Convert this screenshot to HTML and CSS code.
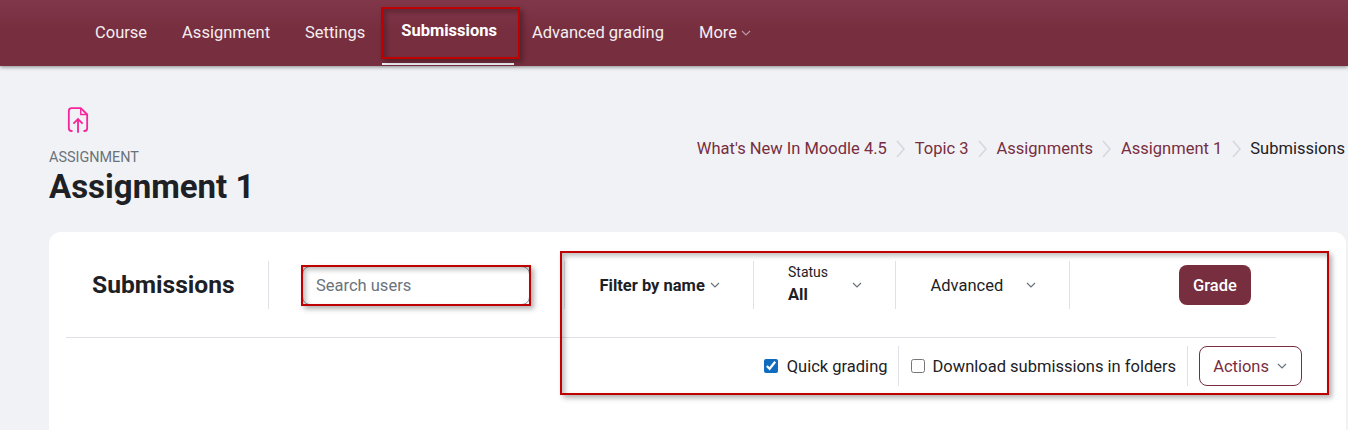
FILE: index.html
```html
<!DOCTYPE html>
<html lang="en">
<head>
  <meta charset="UTF-8">
  <meta name="viewport" content="width=device-width, initial-scale=1.0">
  <title>Assignment 1: Submissions</title>
  <link rel="stylesheet" href="styles.css">
</head>
<body>
  <nav class="topnav">
    <a class="nav-item">Course</a>
    <a class="nav-item">Assignment</a>
    <a class="nav-item">Settings</a>
    <a class="nav-item active">Submissions<span class="callout callout-nav"></span></a>
    <a class="nav-item">Advanced grading</a>
    <a class="nav-item">More
      <svg class="chev chev-nav" viewBox="0 0 10 6"><path d="M1 1l4 4 4-4"/></svg>
    </a>
  </nav>

  <header class="page-head">
    <div class="page-title">
      <svg class="mod-icon" viewBox="0 0 24 30">
        <path d="M6 27H5a3 3 0 0 1-3-3V5a3 3 0 0 1 3-3h10l7 7v15a3 3 0 0 1-3 3h-1"/>
        <path d="M15 2v7h7" class="fold"/>
        <path d="M12 29V14M7 19l5-5 5 5"/>
      </svg>
      <div class="mod-type">ASSIGNMENT</div>
      <h1>Assignment 1</h1>
    </div>
    <ol class="breadcrumb">
      <li><a>What's New In Moodle 4.5</a></li>
      <li><svg class="crumb-sep" viewBox="0 0 9 18"><path d="M1 1l7 8-7 8"/></svg><a>Topic 3</a></li>
      <li><svg class="crumb-sep" viewBox="0 0 9 18"><path d="M1 1l7 8-7 8"/></svg><a>Assignments</a></li>
      <li><svg class="crumb-sep" viewBox="0 0 9 18"><path d="M1 1l7 8-7 8"/></svg><a>Assignment 1</a></li>
      <li><svg class="crumb-sep" viewBox="0 0 9 18"><path d="M1 1l7 8-7 8"/></svg><span>Submissions</span></li>
    </ol>
  </header>

  <main class="card">
    <div class="toolbar">
      <h2 class="card-title">Submissions</h2>
      <div class="search">
        <input type="text" placeholder="Search users">
        <span class="callout"></span>
      </div>
      <div class="filters">
        <div class="filter filter-name">
          <strong>Filter by name</strong>
          <svg class="chev" viewBox="0 0 10 6"><path d="M1 1l4 4 4-4"/></svg>
        </div>
        <div class="filter filter-status">
          <div class="status-text">
            <small>Status</small>
            <strong>All</strong>
          </div>
          <svg class="chev" viewBox="0 0 10 6"><path d="M1 1l4 4 4-4"/></svg>
        </div>
        <div class="filter filter-advanced">
          <span>Advanced</span>
          <svg class="chev" viewBox="0 0 10 6"><path d="M1 1l4 4 4-4"/></svg>
        </div>
      </div>
      <button class="btn-grade">Grade</button>
    </div>

    <hr class="rule">

    <div class="options">
      <label class="option option-quick"><input type="checkbox" checked> Quick grading</label>
      <label class="option option-sep"><input type="checkbox"> Download submissions in folders</label>
      <div class="option-sep actions-cell">
        <button class="btn-actions">Actions
          <svg class="chev" viewBox="0 0 10 6"><path d="M1 1l4 4 4-4"/></svg>
        </button>
      </div>
    </div>

    <span class="callout callout-filters"></span>
  </main>
</body>
</html>
```

FILE: styles.css
```css
* {
  box-sizing: border-box;
}

html, body {
  height: 430px;
  overflow: hidden;
}

body {
  margin: 0;
  background: #f1f2f6;
  color: #1d2125;
  font-family: Roboto, "Liberation Sans", sans-serif;
  font-size: 16.5px;
}

/* top navigation */
.topnav {
  display: flex;
  height: 66px;
  padding-left: 77.5px;
  background: linear-gradient(180deg, #80374a, #772e3f 45%);
  box-shadow: 0 1px 4px rgba(0, 0, 0, 0.45);
}

.nav-item {
  position: relative;
  display: flex;
  align-items: center;
  gap: 4px;
  height: 65px;
  padding: 0 17.5px;
  color: #f4eef0;
}

.nav-item.active {
  margin: 0 0.5px 0 -0.5px;
  padding: 0 17px 2px 19px;
  border-bottom: 2px solid #f1f2f6;
  color: #fff;
  font-weight: 700;
}

/* red annotation boxes drawn over the screenshot */
.callout {
  position: absolute;
  inset: -1px;
  border: 2px solid #c00000;
  box-shadow: 3px 3px 5px rgba(0, 0, 0, 0.3), inset 3px 3px 5px rgba(0, 0, 0, 0.25);
  pointer-events: none;
}

.callout-nav {
  inset: 7px -6px 4px -1px;
}

.callout-filters {
  inset: 19px auto auto 511px;
  width: 769px;
  height: 144px;
}

.chev {
  width: 10px;
  height: 6px;
  fill: none;
  stroke: #6a737b;
  stroke-width: 1.2;
}

.chev-nav {
  stroke: #b79aa3;
}

/* page heading */
.page-head {
  display: flex;
  justify-content: space-between;
  height: 166px;
  padding: 40px 3px 0 49px;
}

.mod-icon {
  display: block;
  width: 22px;
  height: 28px;
  margin-left: 18px;
  fill: none;
  stroke: #f7259b;
  stroke-width: 2;
}

.mod-icon .fold {
  stroke-width: 1.5;
}

.mod-type {
  margin-top: 16px;
  color: #6a737b;
  font-size: 14.4px;
  line-height: 16px;
}

h1 {
  margin: 1px 0 0;
  font-size: 33px;
  font-weight: 700;
  line-height: 39px;
}

.breadcrumb {
  display: flex;
  align-self: flex-start;
  gap: 9.5px;
  margin: 33px 0 0;
  padding: 0;
  list-style: none;
  line-height: 20px;
}

.breadcrumb li {
  display: flex;
  align-items: center;
  gap: 9.5px;
}

.breadcrumb a {
  color: #772e3f;
}

.crumb-sep {
  width: 9px;
  height: 18px;
  fill: none;
  stroke: #d3d8de;
  stroke-width: 1.6;
}

/* main card */
.card {
  position: relative;
  height: 198px;
  margin: 0 2px 0 49px;
  padding: 29px 44px 0 17px;
  background: #fff;
  border-radius: 12px 12px 0 0;
}

.toolbar {
  display: flex;
  align-items: center;
  height: 48px;
}

.card-title {
  width: 203px;
  height: 48px;
  margin: 0;
  padding-left: 26px;
  border-right: 1px solid #dee2e6;
  font-size: 24.6px;
  font-weight: 700;
  line-height: 48px;
}

.search {
  position: relative;
  width: 228px;
  height: 39px;
  margin-left: 33px;
}

.search input {
  width: 100%;
  height: 100%;
  padding: 0 13px;
  border: 1px solid #8f959e;
  border-radius: 8px;
  font: inherit;
}

.search input::placeholder {
  color: #6a737b;
  opacity: 1;
}

.filters {
  display: flex;
  height: 48px;
  margin-left: 34px;
  border-left: 1px solid #dee2e6;
}

.filter {
  display: flex;
  align-items: center;
  justify-content: space-between;
  border-right: 1px solid #dee2e6;
}

.filter-name {
  width: 189px;
  padding: 0 33px 0 34.5px;
}

.filter-status {
  width: 142px;
  padding: 0 33px 0 34px;
}

.status-text {
  padding-top: 2px;
}

.status-text small {
  display: block;
  font-size: 14px;
  line-height: 18px;
}

.status-text strong {
  display: block;
  line-height: 28px;
}

.filter-advanced {
  width: 174px;
  padding: 0 33px 0 34.5px;
}

.btn-grade {
  width: 72px;
  height: 40px;
  margin-left: 109px;
  border: 0;
  border-radius: 8px;
  background: #772e3f;
  color: #fff;
  font: 500 16.5px Roboto, "Liberation Sans", sans-serif;
}

.rule {
  width: 1210px;
  margin: 28px 0 8px;
  border: 0;
  border-top: 1px solid #dee2e6;
}

.options {
  display: flex;
  justify-content: flex-end;
  height: 40px;
}

.option {
  display: flex;
  align-items: center;
  gap: 8px;
}

.option-quick {
  gap: 9px;
  margin-right: -1px;
}

.option input {
  width: 14px;
  height: 14px;
  margin: 0;
  accent-color: #0f6cbf;
}

.option-sep {
  margin-left: 11px;
  padding-left: 12px;
  border-left: 1px solid #dee2e6;
}

.actions-cell {
  display: flex;
  padding-left: 11px;
}

.btn-actions {
  display: flex;
  align-items: center;
  gap: 8px;
  height: 40px;
  padding: 0 14px 0 13px;
  border: 1px solid #772e3f;
  border-radius: 8px;
  background: #fff;
  color: #772e3f;
  font: inherit;
}
```
